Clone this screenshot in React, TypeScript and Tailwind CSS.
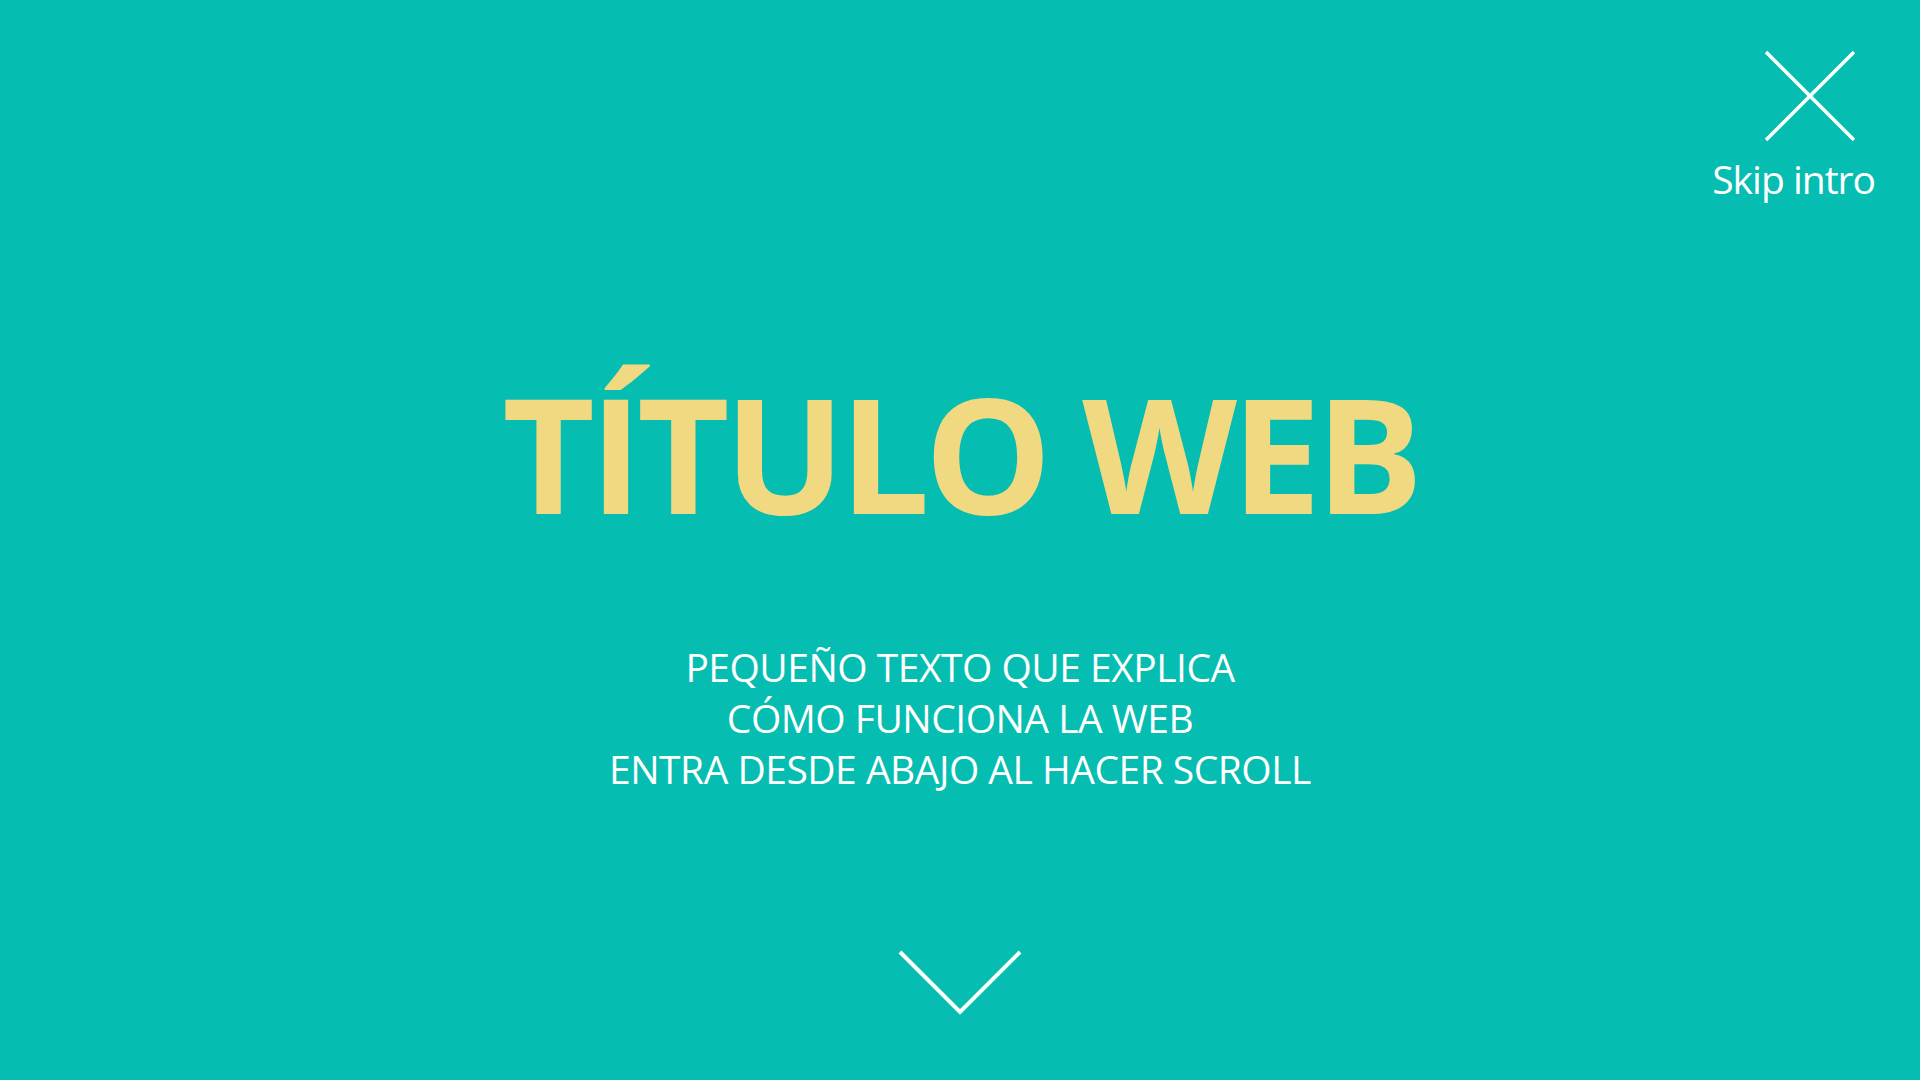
import React from "react";

export default function App() {
  return (
    <div
      className="w-full h-[1080px] bg-[#05bdb0] flex flex-col overflow-hidden"
      style={{ fontFamily: '"Open Sans", "Noto Sans", sans-serif' }}
    >
      <div className="flex justify-end pt-[50px] pr-[45px]">
        <div className="flex flex-col items-end">
          <svg width="92" height="92" viewBox="0 0 92 92" className="mr-[19px]" aria-hidden="true">
            <line x1="2" y1="2" x2="90" y2="90" stroke="#ffffff" strokeWidth="3.5" />
            <line x1="90" y1="2" x2="2" y2="90" stroke="#ffffff" strokeWidth="3.5" />
          </svg>
          <div className="mt-[17px] text-[39px] leading-none text-white tracking-[-1px]">Skip intro</div>
        </div>
      </div>

      <h1 className="mt-[174px] text-center text-[160px] leading-none font-bold text-[#f1d982] tracking-[-5.5px]">
        TÍTULO WEB
      </h1>

      <div className="mt-[109px] flex flex-col items-center text-white text-[39px] leading-[51px] tracking-[-0.5px]">
        <p>PEQUEÑO TEXTO QUE EXPLICA</p>
        <p>CÓMO FUNCIONA LA WEB</p>
        <p>ENTRA DESDE ABAJO AL HACER SCROLL</p>
      </div>

      <div className="mt-[156px] flex justify-center">
        <svg width="124" height="66" viewBox="0 0 124 66" aria-hidden="true">
          <polyline points="2,2 62,62 122,2" fill="none" stroke="#ffffff" strokeWidth="4" />
        </svg>
      </div>
    </div>
  );
}
